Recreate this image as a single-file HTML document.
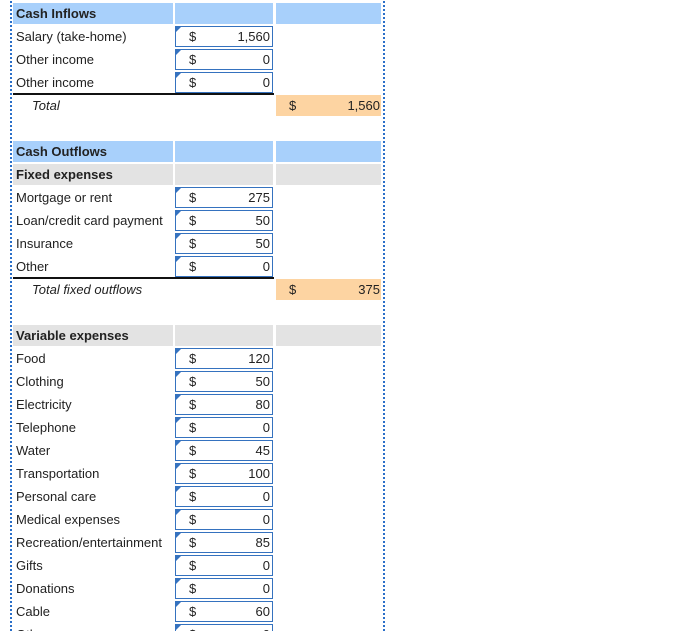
<!DOCTYPE html>
<html><head><meta charset="utf-8"><style>
html{overflow:hidden;height:631px}
body{margin:0;width:681px;height:631px;overflow:hidden;background:#fff;font-family:"Liberation Sans",Arial,sans-serif;font-size:13px;color:#222;position:relative}
.frame{position:absolute;left:10px;top:-2px;width:371px;height:633px;border-left:2px dotted #2a6fc9;border-right:2px dotted #2a6fc9}
.r{position:absolute;left:13px;width:368px;height:23px}
.l{position:absolute;left:3px;top:0;line-height:23px;white-space:nowrap}
.b{font-weight:bold}
.i{font-style:italic;left:19px}
.c1,.c2,.c3{position:absolute;top:1px;height:21px}
.c1{left:0;width:160px}.c2{left:162px;width:98px}.c3{left:263px;width:105px}
.blue{background:#a8d0fb}.gray{background:#e3e3e3}.org{background:#fdd4a2}
.box{position:absolute;left:162px;top:1px;width:96px;height:19px;border:1px solid #3572bf;background:#fff}
.box:before{content:"";position:absolute;left:0;top:0;border-top:5px solid #3572bf;border-right:5px solid transparent}
.d{position:absolute;left:13px;top:0;line-height:19px}
.v{position:absolute;right:2px;top:0;line-height:19px}
.tot .d{left:276px;line-height:23px}.tot .v{right:1px;line-height:23px}
.line{position:absolute;left:0;top:-1px;width:261px;height:2px;background:#111}
</style></head><body>
<div class="frame"></div>

<div class="r" style="top:2px"><div class="c1 blue"></div><div class="c2 blue"></div><div class="c3 blue"></div><div class="l b">Cash Inflows</div></div>
<div class="r" style="top:25px"><div class="l">Salary (take-home)</div><div class="box"><span class="d">$</span><span class="v">1,560</span></div></div>
<div class="r" style="top:48px"><div class="l">Other income</div><div class="box"><span class="d">$</span><span class="v">0</span></div></div>
<div class="r" style="top:71px"><div class="l">Other income</div><div class="box"><span class="d">$</span><span class="v">0</span></div></div>
<div class="r tot" style="top:94px"><div class="line"></div><div class="c3 org"></div><div class="l i">Total</div><span class="d">$</span><span class="v">1,560</span></div>

<div class="r" style="top:140px"><div class="c1 blue"></div><div class="c2 blue"></div><div class="c3 blue"></div><div class="l b">Cash Outflows</div></div>
<div class="r" style="top:163px"><div class="c1 gray"></div><div class="c2 gray"></div><div class="c3 gray"></div><div class="l b">Fixed expenses</div></div>
<div class="r" style="top:186px"><div class="l">Mortgage or rent</div><div class="box"><span class="d">$</span><span class="v">275</span></div></div>
<div class="r" style="top:209px"><div class="l">Loan/credit card payment</div><div class="box"><span class="d">$</span><span class="v">50</span></div></div>
<div class="r" style="top:232px"><div class="l">Insurance</div><div class="box"><span class="d">$</span><span class="v">50</span></div></div>
<div class="r" style="top:255px"><div class="l">Other</div><div class="box"><span class="d">$</span><span class="v">0</span></div></div>
<div class="r tot" style="top:278px"><div class="line"></div><div class="c3 org"></div><div class="l i">Total fixed outflows</div><span class="d">$</span><span class="v">375</span></div>

<div class="r" style="top:324px"><div class="c1 gray"></div><div class="c2 gray"></div><div class="c3 gray"></div><div class="l b">Variable expenses</div></div>
<div class="r" style="top:347px"><div class="l">Food</div><div class="box"><span class="d">$</span><span class="v">120</span></div></div>
<div class="r" style="top:370px"><div class="l">Clothing</div><div class="box"><span class="d">$</span><span class="v">50</span></div></div>
<div class="r" style="top:393px"><div class="l">Electricity</div><div class="box"><span class="d">$</span><span class="v">80</span></div></div>
<div class="r" style="top:416px"><div class="l">Telephone</div><div class="box"><span class="d">$</span><span class="v">0</span></div></div>
<div class="r" style="top:439px"><div class="l">Water</div><div class="box"><span class="d">$</span><span class="v">45</span></div></div>
<div class="r" style="top:462px"><div class="l">Transportation</div><div class="box"><span class="d">$</span><span class="v">100</span></div></div>
<div class="r" style="top:485px"><div class="l">Personal care</div><div class="box"><span class="d">$</span><span class="v">0</span></div></div>
<div class="r" style="top:508px"><div class="l">Medical expenses</div><div class="box"><span class="d">$</span><span class="v">0</span></div></div>
<div class="r" style="top:531px"><div class="l">Recreation/entertainment</div><div class="box"><span class="d">$</span><span class="v">85</span></div></div>
<div class="r" style="top:554px"><div class="l">Gifts</div><div class="box"><span class="d">$</span><span class="v">0</span></div></div>
<div class="r" style="top:577px"><div class="l">Donations</div><div class="box"><span class="d">$</span><span class="v">0</span></div></div>
<div class="r" style="top:600px"><div class="l">Cable</div><div class="box"><span class="d">$</span><span class="v">60</span></div></div>
<div class="r" style="top:623px"><div class="l">Other</div><div class="box"><span class="d">$</span><span class="v">0</span></div></div>
</body></html>
